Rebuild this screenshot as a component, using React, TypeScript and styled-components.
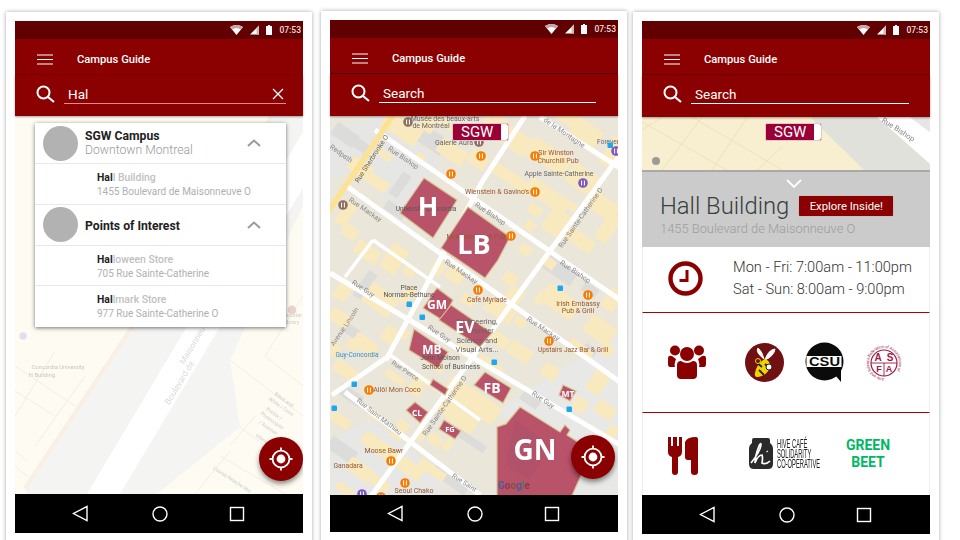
import React from "react";
import styled, { createGlobalStyle } from "styled-components";

const MAROON = "#8b0000";

const GlobalStyle = createGlobalStyle`
  html, body {
    margin: 0;
    padding: 0;
    background: #fff;
    font-family: Roboto, "Liberation Sans", sans-serif;
  }
`;

const Page = styled.div`
  width: 960px;
  height: 540px;
  overflow: hidden;
  display: flex;
  align-items: flex-start;
  padding-left: 6px;
  box-sizing: border-box;
  background: #fff;
`;

const Card = styled.div<{ $top: number; $gap: number }>`
  width: 306px;
  height: 560px;
  flex: none;
  box-sizing: border-box;
  margin-top: ${(p) => p.$top}px;
  margin-right: ${(p) => p.$gap}px;
  padding: 9px;
  background: #fff;
  box-shadow: 0 0 4px rgba(0, 0, 0, 0.35);
`;

const Screen = styled.div`
  width: 288px;
  display: flex;
  flex-direction: column;
`;

const StatusBar = styled.div`
  height: 18px;
  background: #600000;
  display: flex;
  align-items: center;
  justify-content: flex-end;
  gap: 7px;
  padding-right: 2px;
  color: #f3dede;
  font-size: 8.5px;
  font-weight: 500;
`;

const AppBar = styled.div<{ $line: string }>`
  height: 36px;
  box-sizing: border-box;
  background: ${MAROON};
  border-bottom: 1px solid ${(p) => p.$line};
  display: flex;
  align-items: center;
  padding: 5px 0 0 22px;
  gap: 24px;
`;

const AppTitle = styled.div`
  color: #fff;
  font-size: 11.2px;
  font-weight: 500;
`;

const SearchBar = styled.div<{ $h: number; $right: number }>`
  height: ${(p) => p.$h}px;
  box-sizing: border-box;
  background: ${MAROON};
  display: flex;
  align-items: flex-start;
  padding: 10px ${(p) => p.$right}px 0 21px;
  gap: 9px;
  box-shadow: 0 1px 2px rgba(0, 0, 0, 0.35);
  position: relative;
  z-index: 2;
`;

const SearchField = styled.div<{ $line: string }>`
  flex: 1;
  height: 18px;
  box-sizing: content-box;
  border-bottom: 1px solid ${(p) => p.$line};
  display: flex;
  align-items: center;
  justify-content: space-between;
  padding: 0 2px 0 4px;
  color: #fff;
  font-size: 13.5px;
`;

const MapArea = styled.div<{ $h: number }>`
  position: relative;
  height: ${(p) => p.$h}px;
  overflow: hidden;
  flex: none;
`;

const MapSvg = styled.svg`
  display: block;
  filter: blur(0.35px);
`;

const NavBar = styled.div<{ $h: number }>`
  height: ${(p) => p.$h}px;
  background: #000;
  display: grid;
  grid-template-columns: 80px 77px 16px;
  align-items: center;
  padding-left: 57px;
  flex: none;
`;

const Fab = styled.div<{ $bottom: number; $right: number }>`
  position: absolute;
  width: 44px;
  height: 44px;
  right: ${(p) => p.$right}px;
  bottom: ${(p) => p.$bottom}px;
  border-radius: 50%;
  background: ${MAROON};
  box-shadow: 0 3px 5px rgba(0, 0, 0, 0.45);
  display: flex;
  align-items: center;
  justify-content: center;
`;

const Toggle = styled.div<{ $left: number; $top: number }>`
  position: absolute;
  left: ${(p) => p.$left}px;
  top: ${(p) => p.$top}px;
  width: 57px;
  height: 18px;
  box-sizing: border-box;
  background: #9a0036;
  border: 1px solid #e4c6cc;
  border-radius: 2px;
  color: #fff;
  font-size: 15px;
  line-height: 16px;
  padding-left: 8px;
  z-index: 3;
  &::after {
    content: "";
    position: absolute;
    top: 0;
    right: 0;
    width: 7px;
    height: 16px;
    background: #fff;
    border-radius: 0 2px 2px 0;
  }
`;

/* search results */
const ResultCard = styled.div`
  position: absolute;
  left: 20px;
  top: 7px;
  width: 251px;
  background: #fff;
  box-shadow: 0 1px 4px rgba(0, 0, 0, 0.55);
  z-index: 3;
`;

const GroupRow = styled.div<{ $h: number }>`
  height: ${(p) => p.$h}px;
  box-sizing: border-box;
  display: flex;
  align-items: center;
  padding: 0 25px 0 8px;
  gap: 7px;
  border-bottom: 1px solid #e8e8e8;
`;

const Avatar = styled.div`
  width: 35px;
  height: 35px;
  flex: none;
  border-radius: 50%;
  background: #b2b2b2;
`;

const GroupText = styled.div<{ $shift?: number }>`
  flex: 1;
  display: flex;
  flex-direction: column;
  padding-top: ${(p) => p.$shift || 0}px;
`;

const GroupTitle = styled.div`
  font-size: 12.2px;
  font-weight: 700;
  color: #222;
`;

const GroupSub = styled.div`
  font-size: 12.2px;
  font-weight: 300;
  color: #999;
`;

const ResultRow = styled.div<{ $last?: boolean }>`
  height: 40.5px;
  box-sizing: border-box;
  padding: 7px 0 0 62px;
  border-bottom: ${(p) => (p.$last ? "none" : "1px solid #e8e8e8")};
  font-size: 10px;
  color: #b0b0b0;
  display: flex;
  flex-direction: column;
  gap: 2px;
`;

const ResultName = styled.div`
  font-size: 10.4px;
  font-weight: 500;
  color: #c0c0c0;
  b {
    font-weight: 700;
    color: #222;
  }
`;

/* building details */
const Sheet = styled.div`
  height: 77px;
  box-sizing: border-box;
  background: #cbcbcb;
  border-top: 2px solid #a9a9a9;
  padding: 6px 0 0 18px;
  position: relative;
`;

const SheetChevron = styled.svg`
  position: absolute;
  left: 144px;
  top: 7px;
`;

const TitleLine = styled.div`
  display: flex;
  align-items: center;
  gap: 10px;
  margin-top: 14px;
`;

const BuildingName = styled.div`
  font-size: 23.8px;
  font-weight: 300;
  color: #36403d;
  line-height: 28px;
`;

const ExploreButton = styled.div`
  width: 94px;
  height: 20px;
  border-radius: 1px;
  background: ${MAROON};
  color: #fff;
  font-size: 11.3px;
  font-weight: 400;
  display: flex;
  align-items: center;
  justify-content: center;
  box-shadow: 0 0 1px rgba(0, 0, 0, 0.4);
`;

const BuildingAddress = styled.div`
  font-size: 12.9px;
  font-weight: 300;
  color: #9d9d9d;
  margin-top: 1px;
`;

const InfoRow = styled.div<{ $h: number; $line?: boolean; $shift: number }>`
  height: ${(p) => p.$h}px;
  box-sizing: border-box;
  background: #fff;
  display: flex;
  align-items: center;
  padding-left: 25px;
  padding-top: ${(p) => Math.max(p.$shift, 0)}px;
  padding-bottom: ${(p) => Math.max(-p.$shift, 0)}px;
  border-bottom: ${(p) => (p.$line ? "1.5px solid #a80000" : "none")};
  border-left: 1px solid #eee;
  border-right: 1px solid #eee;
`;

const Hours = styled.div`
  margin-left: 30px;
  font-size: 14.6px;
  font-weight: 300;
  line-height: 22.5px;
  color: #333;
`;

const OrgLogos = styled.div`
  display: flex;
  align-items: center;
  margin-left: 39px;
  gap: 21px;
`;

const FoodLogos = styled.div`
  display: flex;
  align-items: center;
  margin: -4px 0 0 50px;
`;

const HiveText = styled.div`
  width: 65px;
  margin-left: 4px;
  font-family: "Liberation Sans", sans-serif;
  font-size: 12px;
  line-height: 10px;
  color: #222;
  text-transform: uppercase;
  white-space: nowrap;
  transform: scaleX(0.48);
  transform-origin: left center;
`;

const GreenBeet = styled.div`
  margin-left: -1px;
  width: 54px;
  text-align: center;
  font-size: 14px;
  line-height: 17px;
  font-weight: 700;
  color: #00b864;
`;

const MapLabel = styled.text<{ $size: number; $color: string; $weight?: number }>`
  font-family: Roboto, sans-serif;
  font-size: ${(p) => p.$size}px;
  fill: ${(p) => p.$color};
  font-weight: ${(p) => p.$weight || 400};
  text-anchor: middle;
  dominant-baseline: middle;
`;

const BuildingLabel = styled.text<{ $size: number }>`
  font-family: "Open Sans", sans-serif;
  font-size: ${(p) => p.$size}px;
  fill: #fff;
  font-weight: 700;
  text-anchor: middle;
  dominant-baseline: central;
`;

const LogoLetters = styled.text<{ $size: number; $color: string }>`
  font-family: "Liberation Sans", sans-serif;
  font-size: ${(p) => p.$size}px;
  fill: ${(p) => p.$color};
  font-weight: 700;
  text-anchor: middle;
`;

const Wifi = () => (
  <svg width="13" height="10" viewBox="0 0 13 10">
    <path d="M0 2 Q6.5 -2 13 2 L6.5 10 Z" fill="#fff" />
    <path d="M0 2 Q6.5 -2 13 2 L11 4.5 Q6.5 1.5 2 4.5 Z" fill="#c9a3a3" />
  </svg>
);

const Signal = () => (
  <svg width="9" height="10" viewBox="0 0 9 9">
    <path d="M9 0 V9 H0 Z" fill="#fff" />
    <path d="M9 0 V9 H6.5 V2.5 Z" fill="#cbb" />
  </svg>
);

const Battery = () => (
  <svg width="6" height="10" viewBox="0 0 6 10">
    <path d="M0 1 H2 V0 H4 V1 H6 V10 H0 Z" fill="#fff" />
  </svg>
);

const Hamburger = () => (
  <svg width="16" height="11" viewBox="0 0 16 11">
    <path d="M0 1 H16 M0 5.5 H16 M0 10 H16" stroke="#fff" strokeWidth="1.1" fill="none" />
  </svg>
);

const SearchIcon = () => (
  <svg width="19" height="18" viewBox="0 0 19 18" style={{ flex: "none" }}>
    <circle cx="7.5" cy="7.5" r="6" stroke="#fff" strokeWidth="2" fill="none" />
    <path d="M12 12 L18 17" stroke="#fff" strokeWidth="2.2" fill="none" />
  </svg>
);

const ClearIcon = () => (
  <svg width="12" height="12" viewBox="0 0 12 12">
    <path d="M1 1 L11 11 M11 1 L1 11" stroke="#fff" strokeWidth="1.3" fill="none" />
  </svg>
);

const BackIcon = () => (
  <svg width="16" height="17" viewBox="0 0 16 17">
    <path d="M15 1.5 V15.5 L1.5 8.5 Z" stroke="#fff" strokeWidth="1.4" fill="none" />
  </svg>
);

const HomeIcon = () => (
  <svg width="16" height="16" viewBox="0 0 16 16">
    <circle cx="8" cy="8" r="7" stroke="#fff" strokeWidth="1.4" fill="none" />
  </svg>
);

const RecentIcon = () => (
  <svg width="16" height="16" viewBox="0 0 16 16">
    <rect x="1.5" y="1.5" width="13" height="13" stroke="#fff" strokeWidth="1.4" fill="none" />
  </svg>
);

const LocateIcon = () => (
  <svg width="24" height="24" viewBox="0 0 24 24">
    <circle cx="12" cy="12" r="8.4" stroke="#fff" strokeWidth="1.8" fill="none" />
    <circle cx="12" cy="12" r="4.4" fill="#fff" />
    <path d="M12 0.5 V4 M12 20 V23.5 M0.5 12 H4 M20 12 H23.5" stroke="#fff" strokeWidth="1.8" />
  </svg>
);

const Chevron = () => (
  <svg width="14" height="8" viewBox="0 0 14 8" style={{ flex: "none" }}>
    <path d="M1 7 L7 1.5 L13 7" stroke="#9a9a9a" strokeWidth="2" fill="none" />
  </svg>
);

const ClockIcon = () => (
  <svg width="35" height="35" viewBox="0 0 35 35">
    <circle cx="17.5" cy="17.5" r="15" stroke={MAROON} strokeWidth="4.4" fill="none" />
    <path d="M19 9 V19.5 H11.5" stroke={MAROON} strokeWidth="3" fill="none" />
  </svg>
);

const PeopleIcon = () => (
  <svg width="38" height="35" viewBox="0 0 38 35">
    <g fill={MAROON}>
      <circle cx="7" cy="5.5" r="5" />
      <circle cx="31" cy="5.5" r="5" />
      <circle cx="19" cy="9" r="7" />
      <path d="M0 13 Q0 10 4 11 L8 14 Q6 19 7 22 H2 Q0 22 0 19 Z" />
      <path d="M38 13 Q38 10 34 11 L30 14 Q32 19 31 22 H36 Q38 22 38 19 Z" />
      <path d="M9 20 Q9 16 13 16 Q19 20 25 16 Q29 16 29 20 V30 Q29 34 25 34 H13 Q9 34 9 30 Z" />
    </g>
  </svg>
);

const CutleryIcon = () => (
  <svg width="31" height="38" viewBox="0 0 31 38">
    <g fill={MAROON}>
      <path d="M0 0 H3 V9 H5 V0 H9 V9 H11 V0 H14 V15 Q14 19 10 20 V35 Q10 38 7 38 Q4 38 4 35 V20 Q0 19 0 15 Z" />
      <path d="M17 5 Q19 0 28 0 Q30 0 30 2 V35 Q30 38 26.5 38 Q23 38 23 35 V23 H20 Q17 23 17 20 Z" />
    </g>
  </svg>
);

const HiveBadge = () => (
  <svg width="39" height="39" viewBox="0 0 39 39">
    <circle cx="19.5" cy="19.5" r="19.5" fill="#701010" />
    <path d="M13 5 Q10 9 19 16 Q17 8 13 5 Z M30 6 Q29 13 20 17 Q23 7 30 6 Z" fill="#fff" stroke="#fff" />
    <path d="M10 30 Q12 20 20 16 Q26 18 25 25 Q21 33 13 34 Q9 34 10 30 Z" fill="#f4d200" />
    <path d="M11 19 L17 24 M20 21 L25 26 M14 27 L19 32" stroke="#221" strokeWidth="1.8" />
    <circle cx="13" cy="18" r="2.5" fill="none" stroke="#e8d000" strokeWidth="1" />
    <circle cx="24" cy="24" r="3" fill="#fff" stroke="#222" />
  </svg>
);

const CsuBadge = () => (
  <svg width="39" height="42" viewBox="0 0 39 42">
    <circle cx="19.5" cy="19.5" r="19" fill="#0b0b0b" />
    <path d="M30 33 L36 40 L36 28 Z" fill="#0b0b0b" />
    <rect x="1.5" y="14" width="35" height="11" fill="#fff" />
    <LogoLetters x="19.5" y="24" $size={12} $color="#0b0b0b" textLength="31" lengthAdjust="spacingAndGlyphs">
      CSU
    </LogoLetters>
  </svg>
);

const ArtsBadge = () => (
  <svg width="38" height="38" viewBox="0 0 38 38">
    <defs>
      <path id="artsRing" d="M19 35 A16 16 0 1 1 19.01 35" fill="none" />
    </defs>
    <circle cx="19" cy="19" r="13" fill="#fff" stroke="#9a1c46" strokeWidth="1.2" />
    <path d="M6 19 H32 M19 19 V32" stroke="#9a1c46" strokeWidth="0.9" />
    <LogoLetters x="13" y="17" $size={10} $color="#9a1c46">A</LogoLetters>
    <LogoLetters x="25" y="17" $size={10} $color="#9a1c46">S</LogoLetters>
    <LogoLetters x="14" y="28" $size={9} $color="#9a1c46">F</LogoLetters>
    <LogoLetters x="24" y="28" $size={9} $color="#9a1c46">A</LogoLetters>
    <MapLabel $size={4} $color="#9a1c46" style={{ textAnchor: "start" }}>
      <textPath href="#artsRing">Arts and Science Federation of Associations of</textPath>
    </MapLabel>
  </svg>
);

const HiveJar = () => (
  <svg width="24" height="31" viewBox="0 0 24 31" style={{ flex: "none" }}>
    <path
      d="M5 0 H19 Q21 0 21 2 V5 Q24 7 24 11 V26 Q24 31 19 31 H5 Q0 31 0 26 V11 Q0 7 3 5 V2 Q3 0 5 0 Z"
      fill="#2a2a2a"
    />
    <path
      d="M2 25 Q11 14 12 7 Q12 4 10 8 Q6 18 6 25 Q9 17 13 17 Q14 20 13 25 Q17 27 21 23 M18 13 L18.5 14"
      stroke="#fff"
      strokeWidth="1.7"
      fill="none"
    />
  </svg>
);

/* [cx, cy, w, h] in page coordinates, turned along the street grid */
const blocks = [
  [402, 128, 40, 20], [452, 152, 30, 16], [478, 160, 20, 14], [515, 140, 34, 20], [549, 157, 44, 20],
  [586, 133, 30, 20], [612, 152, 14, 30], [512, 179, 44, 12], [548, 196, 46, 16], [583, 180, 32, 22],
  [602, 206, 32, 18], [608, 228, 14, 30], [360, 168, 24, 14], [378, 183, 22, 12], [385, 155, 16, 8],
  [350, 232, 16, 12], [367, 252, 26, 14], [346, 214, 12, 24], [394, 259, 18, 28], [410, 270, 12, 12],
  [340, 318, 22, 14], [380, 300, 32, 22], [408, 295, 10, 18], [365, 345, 26, 14], [345, 370, 24, 12],
  [455, 275, 18, 14], [438, 268, 12, 14], [510, 279, 14, 12], [515, 295, 16, 14], [560, 302, 38, 20],
  [600, 330, 30, 20], [612, 300, 14, 22], [556, 222, 20, 26], [580, 240, 30, 14], [530, 226, 10, 10],
  [500, 340, 18, 12], [520, 352, 24, 14], [580, 350, 26, 12], [598, 382, 16, 24], [607, 350, 12, 12],
  [540, 298, 8, 14], [500, 310, 30, 16], [468, 300, 14, 10], [490, 365, 26, 10], [462, 350, 14, 10],
  [472, 400, 60, 20], [462, 420, 30, 16], [435, 365, 20, 8], [448, 405, 14, 20], [418, 385, 14, 22],
  [395, 378, 22, 8], [340, 420, 22, 10], [400, 430, 12, 20], [378, 446, 36, 14], [405, 465, 40, 14],
  [360, 470, 28, 14], [432, 470, 30, 10], [435, 440, 14, 10], [345, 490, 20, 8], [550, 372, 16, 14],
  [580, 405, 14, 14], [605, 410, 20, 14], [610, 435, 10, 20], [427, 125, 16, 12], [420, 158, 10, 10],
  [440, 120, 40, 6], [570, 120, 40, 12], [487, 128, 14, 20], [500, 120, 14, 8],
  [535, 210, 14, 10], [570, 205, 14, 8], [525, 250, 12, 10], [548, 262, 16, 10], [520, 322, 12, 8],
  [342, 292, 14, 16], [352, 345, 10, 10], [390, 335, 14, 16], [405, 335, 6, 10], [335, 350, 10, 12],
  [375, 415, 12, 8], [420, 435, 10, 10], [378, 482, 26, 10], [448, 445, 8, 12], [468, 335, 10, 8],
];

const greyBlocks = [
  [345, 135, 26, 14], [360, 145, 16, 10], [432, 140, 30, 18], [400, 185, 10, 26], [395, 210, 22, 10],
  [365, 285, 10, 30], [350, 330, 20, 10], [560, 270, 34, 16], [590, 290, 16, 10], [530, 400, 20, 10],
  [350, 395, 26, 12], [342, 450, 30, 14], [450, 480, 40, 10], [470, 440, 36, 8], [590, 350, 14, 8],
];

const mapStreets = [
  "M540 117 L620 168",
  "M375 130 L620 300",
  "M345 185 L620 382",
  "M330 273 L620 445",
  "M386 360 L482 182 L525 116",
  "M332 395 L386 358",
  "M350 525 L620 155",
  "M345 392 L480 495",
  "M390 355 L480 420",
  "M373 240 L345 277",
  "M373 240 L440 287",
];

const mapLabels: [string, number, number, number, number, string][] = [
  ["Musée des beaux-arts", 445, 119, 0, 7, "#666"],
  ["de Montréal", 431, 126, 0, 7, "#666"],
  ["Galerie Aura", 454, 143, 0, 7, "#666"],
  ["Rue Sherbrooke O", 372, 159, -57, 7, "#76653a"],
  ["Rue Bishop", 403, 158, 34, 7, "#888"],
  ["Redpath", 341, 154, 35, 7, "#888"],
  ["Rue Mackay", 365, 210, 34, 7, "#888"],
  ["de la Montagne", 564, 133, 34, 7, "#888"],
  ["Forever", 608, 142, 0, 6.6, "#666"],
  ["Sir Winston", 556, 153, 0, 7, "#96572f"],
  ["Churchill Pub", 558, 161, 0, 7, "#96572f"],
  ["Apple Sainte-Catherine", 559, 174, 0, 6.8, "#666"],
  ["Wienstein & Gavino's", 497, 192, 0, 7, "#96572f"],
  ["Rue Bishop", 490, 214, 34, 7, "#888"],
  ["Université Concordia", 426, 209, 0, 6.6, "#555"],
  ["McKibbin's Irish Pub", 476, 237, 0, 6.6, "#96572f"],
  ["Rue Sainte-Catherine O", 581, 218, -55, 7, "#888"],
  ["Rue Mackay", 461, 272, 34, 7, "#888"],
  ["Rue Bishop", 575, 272, 34, 7, "#888"],
  ["Place", 409, 288, 0, 6.8, "#555"],
  ["Norman-Bethune", 409, 295, 0, 6.8, "#555"],
  ["Rue Guy", 363, 289, 34, 7, "#888"],
  ["Café Myriade", 487, 300, 0, 6.8, "#96572f"],
  ["Irish Embassy", 578, 304, 0, 7, "#96572f"],
  ["Pub & Grill", 578, 311, 0, 7, "#96572f"],
  ["Avenue Lincoln", 345, 327, -56, 6.6, "#888"],
  ["Engineering,", 477, 322, 0, 7.6, "#666"],
  ["Computer", 477, 331, 0, 7.6, "#666"],
  ["Science and", 477, 341, 0, 7.6, "#666"],
  ["Visual Arts...", 477, 350, 0, 7.6, "#666"],
  ["Rue Mackay", 543, 329, 34, 7, "#888"],
  ["Rue Guy", 439, 334, 34, 7, "#888"],
  ["Upstairs Jazz Bar & Grill", 573, 350, 0, 6.6, "#96572f"],
  ["Guy-Concordia", 357, 355, 0, 6.6, "#3a8fc7"],
  ["John Molson", 440, 358, 0, 6.8, "#555"],
  ["School of Business", 451, 367, 0, 6.8, "#555"],
  ["Allô! Mon Coco", 397, 390, 0, 7, "#96572f"],
  ["Rue Pierce", 405, 371, 34, 6.6, "#888"],
  ["Rue Sainte-Catherine O", 445, 406, -55, 7, "#888"],
  ["Rue Saint Mathieu", 379, 417, 38, 6.8, "#888"],
  ["Rue Guy", 543, 400, 34, 7, "#888"],
  ["Moose Bawr", 384, 451, 0, 7, "#96572f"],
  ["Seoul Chako", 414, 491, 0, 7, "#96572f"],
  ["Ganadara", 348, 466, 0, 6.8, "#96572f"],
  ["Rue Saint", 464, 483, 34, 6.6, "#888"],
];

const orangePins = [
  [481, 156], [451, 174], [535, 156], [535, 192], [511, 236], [478, 290], [588, 295], [549, 341],
  [369, 390], [391, 461], [405, 483], [381, 497],
];

const bluePins = [
  [409, 304], [422, 317], [560, 288], [494, 362], [354, 384], [334, 408], [569, 409], [610, 145],
];

const overlays = [
  { pts: "424,178 457,200 433,238 400,213", label: "H", x: 428, y: 205, size: 27 },
  { pts: "468,207 510,237 498,260 485,278 441,248", label: "LB", x: 474, y: 243, size: 27 },
  { pts: "437,288 453,300 442,320 423,308", label: "GM", x: 437, y: 304, size: 12 },
  { pts: "451,305 492,333 480,347 439,320", label: "EV", x: 465, y: 327, size: 16 },
  { pts: "414,329 448,352 438,368 409,350", label: "MB", x: 432, y: 349, size: 12 },
  { pts: "433,379 448,389 445,395 430,385", label: "", x: 0, y: 0, size: 0 },
  { pts: "485,372 511,388 503,403 474,385", label: "FB", x: 492, y: 387, size: 14 },
  { pts: "563,385 576,391 570,401 559,395", label: "MT", x: 568, y: 393, size: 8.5 },
  { pts: "415,402 428,412 420,423 406,410", label: "CL", x: 417, y: 412, size: 8.5 },
  { pts: "444,420 461,431 455,439 439,429", label: "FG", x: 450, y: 429, size: 7.5 },
  {
    pts: "520,407 560,432 565,425 570,430 567,435 592,451 570,500 497,500 497,427 506,424",
    label: "GN",
    x: 535,
    y: 449,
    size: 28,
  },
];

const PinCircle = ({ x, y, color }: { x: number; y: number; color: string }) => (
  <g>
    <circle cx={x} cy={y} r="4.8" fill={color} />
    <path d={`M${x - 1.4} ${y - 2.5} V${y + 2.5} M${x + 1.4} ${y - 2.5} V${y + 2.5}`} stroke="#fff" strokeWidth="1" />
  </g>
);

const CampusMap = () => (
  <MapSvg width="288" height="379" viewBox="330 116 288 379">
    <rect x="330" y="116" width="288" height="379" fill="#ebe6da" />
    <polygon points="330,130 380,116 440,160 400,215 350,170 330,180" fill="#e6e6e4" />
    <polygon points="330,440 370,420 450,480 440,495 330,495" fill="#e7e7e5" />
    <polygon points="500,410 620,330 620,495 570,495" fill="#e8e8e6" />
    <g>
      {greyBlocks.map(([cx, cy, w, h], i) => (
        <rect key={i} x={-w / 2} y={-h / 2} width={w} height={h} fill="#dcdcda"
          transform={`translate(${cx} ${cy}) rotate(34.5)`} />
      ))}
      {blocks.map(([cx, cy, w, h], i) => (
        <rect key={i} x={-w / 2} y={-h / 2} width={w} height={h} fill="#f9e9bf"
          transform={`translate(${cx} ${cy}) rotate(34.5)`} />
      ))}
    </g>
    <g fill="none" stroke="#fff">
      {mapStreets.map((d, i) => (
        <path key={i} d={d} strokeWidth={i > 7 ? 3.5 : 5} />
      ))}
    </g>
    <path d="M328 212 L394 114" stroke="#fde293" strokeWidth="5.5" fill="none" />
    {overlays.map((o) => (
      <polygon key={o.pts} points={o.pts} fill="#b9536a" stroke="#d8c48f" strokeWidth="1.2" />
    ))}
    <polygon points="515,420 550,445 530,480 505,465" fill="#a9506b" opacity="0.45" />
    {mapLabels.map(([t, x, y, r, s, c], i) => (
      <MapLabel key={i} x={x} y={y} $size={s} $color={c} transform={r ? `rotate(${r} ${x} ${y})` : undefined}>
        {t}
      </MapLabel>
    ))}
    {orangePins.map(([x, y]) => (
      <PinCircle key={`${x}-${y}`} x={x} y={y} color="#f57c00" />
    ))}
    <PinCircle x={408} y={122} color="#8d6e63" />
    <PinCircle x={479} y={142} color="#8d6e63" />
    <PinCircle x={343} y={205} color="#8d6e63" />
    <PinCircle x={583} y={183} color="#7e57c2" />
    <PinCircle x={362} y={494} color="#7e57c2" />
    <PinCircle x={616} y={151} color="#7e57c2" />
    {bluePins.map(([x, y]) => (
      <rect key={`${x}-${y}`} x={x - 2.5} y={y - 2.5} width="5.5" height="5.5" rx="1" fill="#1ea7f0" />
    ))}
    {overlays.filter((o) => o.label).map((o) => (
      <BuildingLabel key={o.label} x={o.x} y={o.y} $size={o.size}>{o.label}</BuildingLabel>
    ))}
    <MapLabel x={514} y={486} $size={10} $color="#6a4a86" $weight={700}>
      <tspan fill="#4a5a9a">G</tspan>
      <tspan fill="#8a3a4a">o</tspan>
      <tspan fill="#7a5a3a">o</tspan>
      <tspan fill="#4a5a9a">g</tspan>
      <tspan fill="#4a7a5a">l</tspan>
      <tspan fill="#8a3a4a">e</tspan>
    </MapLabel>
  </MapSvg>
);

const PaleMap = () => (
  <MapSvg width="288" height="378" viewBox="0 0 288 378">
    <rect width="288" height="378" fill="#fefcf2" />
    <polygon points="10,372 257,0 288,0 288,90 215,244 225,311 142,378 12,378" fill="#f4f4f3" />
    <polygon points="72,378 105,378 288,72 288,16" fill="#fff" />
    <path d="M10 372 L257 0" stroke="#f9efe5" strokeWidth="4" />
    <g fill="none" stroke="#f3eede" strokeWidth="1">
      <path d="M0 250 L60 290 M0 275 L40 300 M40 235 L0 300 M70 260 L20 330 M0 335 L12 345 M0 350 L12 360" />
      <path d="M215 244 L288 300 M225 311 L250 330 M205 340 L270 378 M180 378 L215 335 M240 300 L215 330" />
      <path d="M288 180 L250 240 L288 270" />
    </g>
    <MapLabel x={43} y={251} $size={5.8} $color="#c4c4c4">Concordia University</MapLabel>
    <MapLabel x={27} y={259} $size={5.8} $color="#c4c4c4">H Building</MapLabel>
    <MapLabel x={165} y={267} $size={8.5} $color="#dadada" transform="rotate(-59 165 267)">Boulevard de</MapLabel>
    <MapLabel x={180} y={226} $size={8.5} $color="#dadada" transform="rotate(-59 180 226)">Maisonneuve</MapLabel>
    <MapLabel x={217} y={364} $size={5} $color="#c9c9c9" transform="rotate(33 217 364)">Course Relache Rec</MapLabel>
    <MapLabel x={269} y={284} $size={5} $color="#c9c9c9" transform="rotate(35 269 284)">Black and</MapLabel>
    <MapLabel x={266} y={291} $size={5} $color="#c9c9c9" transform="rotate(35 266 291)">White / Color</MapLabel>
    <MapLabel x={259} y={298} $size={5} $color="#c9c9c9" transform="rotate(35 259 298)">Printer /</MapLabel>
    <MapLabel x={257} y={305} $size={5} $color="#c9c9c9" transform="rotate(35 257 305)">Photocopier</MapLabel>
    <MapLabel x={253} y={312} $size={5} $color="#c9c9c9" transform="rotate(35 253 312)">/ Scanner</MapLabel>
    <MapLabel x={248} y={324} $size={5} $color="#c9c9c9" transform="rotate(35 248 324)">Internet</MapLabel>
    <MapLabel x={277} y={200} $size={5.6} $color="#cfcfcf">Webster</MapLabel>
    <MapLabel x={276} y={207} $size={5.6} $color="#cfcfcf">Library</MapLabel>
    <circle cx={277} cy={194} r="4.4" fill="#e8d3cd" />
    <circle cx={8} cy={220} r="3.8" fill="#e5dcf3" />
  </MapSvg>
);

const StreetMapZoomed = () => (
  <MapSvg width="288" height="53" viewBox="0 0 288 53">
    <rect width="288" height="53" fill="#f8efd0" />
    <polygon points="168,0 288,0 288,53 222,53" fill="#dfe1da" />
    <polygon points="235,0 268,0 288,15 288,47" fill="#fff" />
    <polygon points="268,0 288,0 288,15" fill="#e6e6e6" />
    <g fill="none" stroke="#ebe2c0" strokeWidth="1">
      <path d="M20 0 L0 13 M0 5 L85 53 M50 0 L140 53 M60 0 L20 53 M105 0 L70 53 M140 30 L115 53" />
    </g>
    <MapLabel x={256} y={13} $size={7.5} $color="#888" transform="rotate(33 256 13)">Rue Bishop</MapLabel>
    <circle cx="14" cy="44" r="4" fill="#9b9b9b" />
  </MapSvg>
);

function Chrome({ line, searchH, searchRight, query, underline, children, mapH, navH }: {
  line: string;
  searchH: number;
  searchRight: number;
  query: string;
  underline: string;
  children: React.ReactNode;
  mapH?: number;
  navH: number;
}) {
  return (
    <Screen>
      <StatusBar>
        <Wifi />
        <Signal />
        <Battery />
        <span>07:53</span>
      </StatusBar>
      <AppBar $line={line}>
        <Hamburger />
        <AppTitle>Campus Guide</AppTitle>
      </AppBar>
      <SearchBar $h={searchH} $right={searchRight}>
        <SearchIcon />
        <SearchField $line={underline}>
          <span>{query || "Search"}</span>
          {query && <ClearIcon />}
        </SearchField>
      </SearchBar>
      {mapH ? <MapArea $h={mapH}>{children}</MapArea> : children}
      <NavBar $h={navH}>
        <BackIcon />
        <HomeIcon />
        <RecentIcon />
      </NavBar>
    </Screen>
  );
}

export default function App() {
  return (
    <Page>
      <GlobalStyle />
      <Card $top={12} $gap={9}>
        <Chrome line="#850000" searchH={41} searchRight={17} query="Hal" underline="#e08a8a" mapH={378} navH={39}>
          <PaleMap />
          <ResultCard>
            <GroupRow $h={41}>
              <Avatar />
              <GroupText>
                <GroupTitle>SGW Campus</GroupTitle>
                <GroupSub>Downtown Montreal</GroupSub>
              </GroupText>
              <Chevron />
            </GroupRow>
            <ResultRow>
              <ResultName><b>Hal</b>l Building</ResultName>
              <div>1455 Boulevard de Maisonneuve O</div>
            </ResultRow>
            <GroupRow $h={41}>
              <Avatar />
              <GroupText $shift={3}>
                <GroupTitle>Points of Interest</GroupTitle>
              </GroupText>
              <Chevron />
            </GroupRow>
            <ResultRow>
              <ResultName><b>Hal</b>loween Store</ResultName>
              <div>705 Rue Sainte-Catherine</div>
            </ResultRow>
            <ResultRow $last>
              <ResultName><b>Hal</b>lmark Store</ResultName>
              <div>977 Rue Sainte-Catherine O</div>
            </ResultRow>
          </ResultCard>
          <Fab $right={0} $bottom={13}><LocateIcon /></Fab>
        </Chrome>
      </Card>
      <Card $top={11} $gap={6}>
        <Chrome line="#4d0000" searchH={42} searchRight={22} query="" underline="#fff" mapH={379} navH={37}>
          <CampusMap />
          <Toggle $left={122} $top={7}>SGW</Toggle>
          <Fab $right={3} $bottom={16}><LocateIcon /></Fab>
        </Chrome>
      </Card>
      <Card $top={12} $gap={0}>
        <Chrome line="#6e0000" searchH={42} searchRight={21} query="" underline="#fff" navH={39}>
          <MapArea $h={53}>
            <StreetMapZoomed />
            <Toggle $left={123} $top={6}>SGW</Toggle>
          </MapArea>
          <Sheet>
            <SheetChevron width="16" height="9" viewBox="0 0 16 9">
              <path d="M1 1 L8 8 L15 1" stroke="#fff" strokeWidth="1.8" fill="none" />
            </SheetChevron>
            <TitleLine>
              <BuildingName>Hall Building</BuildingName>
              <ExploreButton>Explore Inside!</ExploreButton>
            </TitleLine>
            <BuildingAddress>1455 Boulevard de Maisonneuve O</BuildingAddress>
          </Sheet>
          <InfoRow $h={66} $line $shift={-3}>
            <ClockIcon />
            <Hours>
              Mon - Fri: 7:00am - 11:00pm
              <br />
              Sat - Sun: 8:00am - 9:00pm
            </Hours>
          </InfoRow>
          <InfoRow $h={100} $line $shift={0}>
            <PeopleIcon />
            <OrgLogos>
              <HiveBadge />
              <CsuBadge />
              <ArtsBadge />
            </OrgLogos>
          </InfoRow>
          <InfoRow $h={82} $shift={3}>
            <CutleryIcon />
            <FoodLogos>
              <HiveJar />
              <HiveText>
                Hive Café
                <br />
                Solidarity
                <br />
                Co-operative
              </HiveText>
              <GreenBeet>
                GREEN
                <br />
                BEET
              </GreenBeet>
            </FoodLogos>
          </InfoRow>
        </Chrome>
      </Card>
    </Page>
  );
}
